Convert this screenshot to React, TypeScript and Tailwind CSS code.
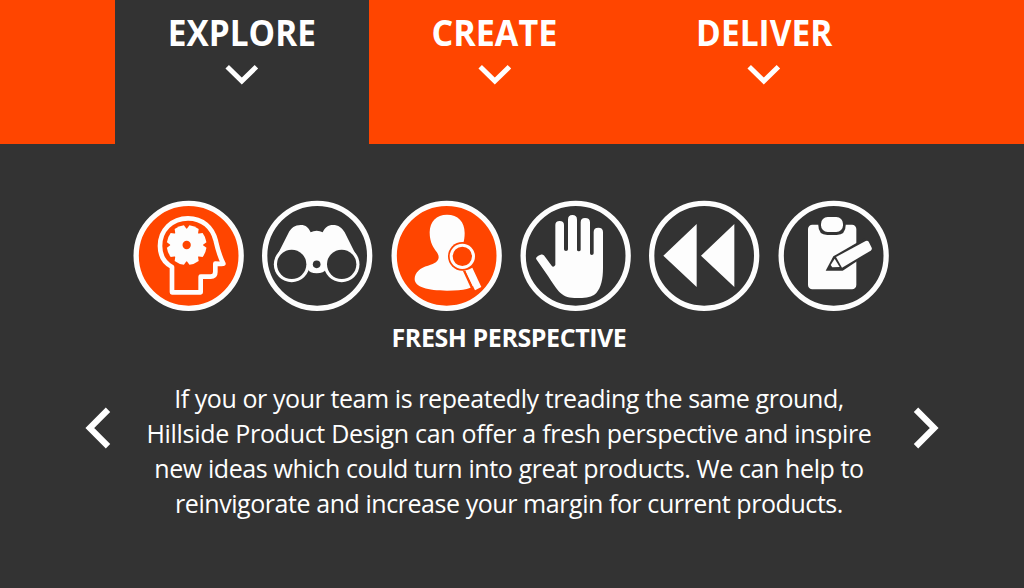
import type { ReactNode } from "react";
import { clsx } from "clsx";

interface Tab {
  label: string;
  width: string;
  text: string;
  active?: boolean;
}

const tabs: Tab[] = [
  { label: "EXPLORE", width: "w-[254px]", text: "scale-x-[0.927]", active: true },
  { label: "CREATE", width: "w-[251px]", text: "scale-x-[0.948]" },
  { label: "DELIVER", width: "w-[288px]", text: "scale-x-[0.93]" },
];

const lines = [
  { text: "If you or your team is repeatedly treading the same ground,", spacing: "tracking-[-0.42px]" },
  { text: "Hillside Product Design can offer a fresh perspective and inspire", spacing: "tracking-[-0.29px]" },
  { text: "new ideas which could turn into great products. We can help to", spacing: "tracking-[-0.39px]" },
  { text: "reinvigorate and increase your margin for current products.", spacing: "tracking-[-0.44px]" },
];

function TabButton({ label, width, text, active }: Tab) {
  return (
    <button
      className={clsx(
        "flex h-36 flex-col items-center pt-2",
        width,
        active && "bg-[#333333]",
      )}
    >
      <span className={clsx("whitespace-nowrap text-[36px] leading-[49px] font-bold", text)}>
        {label}
      </span>
      <svg viewBox="0 0 34 22" className="mt-[7px] h-[22px] w-[34px]" fill="none">
        <path d="M2.2 2.8 16.8 17 31.4 2.8" stroke="white" strokeWidth="5" />
      </svg>
    </button>
  );
}

function Arrow({ direction }: { direction: "left" | "right" }) {
  return (
    <button aria-label={direction === "left" ? "Previous" : "Next"}>
      <svg
        viewBox="0 0 26 42"
        className={clsx("h-[42px] w-[26px]", direction === "right" && "-scale-x-100")}
        fill="none"
      >
        <path d="M23 2.8 4.8 21 23 39.2" stroke="white" strokeWidth="6.2" />
      </svg>
    </button>
  );
}

function IconCircle({ active, cx = 185, children }: { active?: boolean; cx?: number; children: ReactNode }) {
  return (
    <svg viewBox="0 0 366 366" className="h-[122px] w-[122px]" fill="#fdfdfd">
      <circle
        cx={cx}
        cy="182.5"
        r="157.5"
        fill={active ? "#ff4500" : "none"}
        stroke="#fdfdfd"
        strokeWidth="16"
      />
      {children}
    </svg>
  );
}

const gearTeeth = [0, 45, 90, 135, 180, 225, 270, 315];

function HeadIcon() {
  return (
    <g transform="translate(3 0)">
      <path
        d="M132 292V216C108 203 96 179 96 153C96 105 132 70 180 70C224 70 253 98 263 136C268 158 272 178 286 206Q274 207 262 206V231Q262 245 248 245H218V292Z"
        fill="none"
        stroke="#fdfdfd"
        strokeWidth="14"
        strokeLinejoin="round"
      />
      <circle cx="176" cy="150" r="49" />
      {gearTeeth.map((angle) => (
        <path
          key={angle}
          d="M157 108 161 92Q176 88 191 92L195 108Z"
          transform={`rotate(${angle + 22.5} 176 150)`}
        />
      ))}
      <circle cx="176" cy="150" r="12.5" fill="#ff4500" />
    </g>
  );
}

function BinocularsIcon() {
  return (
    <>
      <path d="M62 184 97 115C105 98 117 90 134 90C150 90 158 98 164 112Q172 107 182 107Q192 107 200 112C206 98 216 90 231 90C247 90 258 98 266 112L302 184L304 220L210 222Q204 235 182 235Q161 235 155 222L60 220Z" />
      <circle cx="107" cy="208" r="53.5" />
      <circle cx="257" cy="208" r="53.5" />
      <circle cx="107" cy="208" r="44" fill="#333333" />
      <circle cx="257" cy="208" r="44" fill="#333333" />
      <circle cx="182" cy="208" r="11.5" fill="#333333" />
    </>
  );
}

function PersonSearchIcon() {
  return (
    <>
      <path d="M186 59C219 59 239 80 239 114C239 139 232 158 221 172Q214 185 214 195C217 209 241 216 255 228C266 238 273 253 268 268C264 280 239 287 186 287C128 287 89 276 89 252C89 232 106 218 129 212C151 206 160 199 161 187C161 174 150 168 142 151C137 140 134 128 134 112C135 79 154 59 186 59Z" />
      <circle cx="232" cy="184" r="43" fill="#ff4500" />
      <path d="M233 226 242 228 270 288 264 293Z" fill="#ff4500" />
      <circle cx="232" cy="184" r="33.5" fill="none" stroke="#fdfdfd" strokeWidth="9" />
      <path d="M242 228 262 218 289 276 270 286Z" />
    </>
  );
}

function HandIcon() {
  return (
    <path d="M67 193C64 187 70 183 80 179C86 178 90 181 93 185L113 212Q118 219 124 210V90Q124 78 137 78Q150 78 150 90V163Q150 168 156 168Q162 168 162 163V74Q162 60 175 60Q189 60 189 74V164Q189 169 194 169Q200 169 200 164V82Q200 69 213 69Q228 69 228 82V175Q228 180 233 180Q239 180 239 175V111Q239 98 253 98Q267 98 267 111V219C267 253 261 278 247 294Q235 308 204 309H181C160 309 146 302 134 289C124 277 113 260 102 243Z" />
  );
}

function RewindIcon() {
  return <path d="M61 182 161 87V276ZM174 182 274 87V276Z" />;
}

function ClipboardIcon() {
  return (
    <>
      <rect x="108" y="89" width="145" height="194" rx="13" />
      <path
        d="M139 82H221V91Q221 120 194 120H166Q139 120 139 91Z"
        fill="#333333"
      />
      <rect x="147" y="66" width="66" height="45" rx="20" />
      <path d="M184 184 278 130 306 165 212 227 161 227Z" fill="#333333" />
      <path d="M192 186 281 138Q287 136 290 140L299 158Q301 164 296 167L210 218Z" />
      <path d="M188 191 203 216 181 217 176 210Z" />
    </>
  );
}

export default function App() {
  return (
    <main
      className="h-[588px] w-[1024px] overflow-hidden bg-[#333333] text-white"
      style={{ fontFamily: '"Open Sans", "Noto Sans", sans-serif' }}
    >
      <nav className="flex h-36 bg-[#ff4500] pl-[115px]">
        {tabs.map((tab) => (
          <TabButton key={tab.label} {...tab} />
        ))}
      </nav>

      <section className="pt-[51px]">
        <div className="flex gap-[7px] pl-[127px]">
          <IconCircle active>
            <HeadIcon />
          </IconCircle>
          <IconCircle cx={183.5}>
            <BinocularsIcon />
          </IconCircle>
          <IconCircle active>
            <PersonSearchIcon />
          </IconCircle>
          <IconCircle>
            <HandIcon />
          </IconCircle>
          <IconCircle cx={183.5}>
            <RewindIcon />
          </IconCircle>
          <IconCircle>
            <ClipboardIcon />
          </IconCircle>
        </div>

        <h2 className="mt-[3px] flex h-[34px] justify-center pr-[6px] text-[25px] leading-[34px] font-bold">
          <span className="tracking-[-0.43px]">FRESH PERSPECTIVE</span>
        </h2>

        <div className="mt-[27px] flex justify-between pr-[85px] pl-[85px]">
          <div className="pt-[26px]">
            <Arrow direction="left" />
          </div>
          <div className="flex w-[780px] flex-col items-center pr-[6px] text-[25px] leading-[35px]">
            {lines.map((line) => (
              <p key={line.text} className={clsx("whitespace-nowrap", line.spacing)}>
                {line.text}
              </p>
            ))}
          </div>
          <div className="pt-[26px]">
            <Arrow direction="right" />
          </div>
        </div>
      </section>
    </main>
  );
}
